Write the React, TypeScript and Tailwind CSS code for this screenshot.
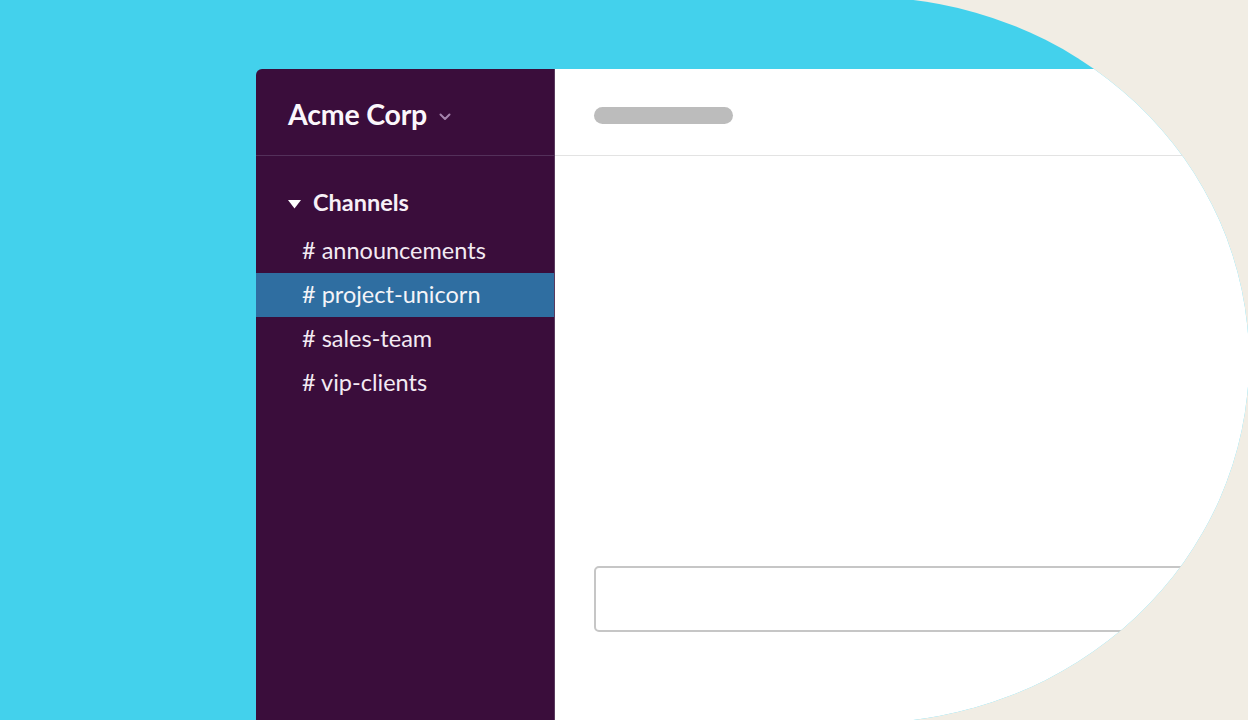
import React from 'react';

const channels = ['announcements', 'project-unicorn', 'sales-team', 'vip-clients'];

const Sidebar: React.FC = () => {
    return (
        <div className="w-[299px] shrink-0 bg-[#3a0d3b] border-r border-[#5a3a5e] text-white">
            <div className="h-[87px] border-b border-[#53305a] flex items-center pl-[32px] pt-[5px]">
                <span className="text-[28.5px] font-bold tracking-[-0.2px] text-[#fbf6fb]">Acme Corp</span>
                <svg className="ml-[12px] mt-[5px]" width="12" height="8" viewBox="0 0 12 8">
                    <polyline points="1.5,1.5 6,6 10.5,1.5" fill="none" stroke="#a584ad" strokeWidth="2" strokeLinecap="round" strokeLinejoin="round" />
                </svg>
            </div>

            <div className="pt-[25px]">
                <div className="h-[44px] mb-[4px] flex items-center pl-[32px]">
                    <svg width="13" height="9" viewBox="0 0 13 9" className="mt-[3px]">
                        <polygon points="0,0 13,0 6.5,8.5" fill="#ffffff" />
                    </svg>
                    <span className="ml-[12px] text-[23.5px] font-bold text-[#f7f0f7]">Channels</span>
                </div>
                {channels.map((c) => (
                    <div
                        key={c}
                        className={
                            c === 'project-unicorn'
                                ? 'h-[44px] flex items-center pl-[46px] bg-[#2f6ea1] text-[23.5px] text-[#f4f4f8]'
                                : 'h-[44px] flex items-center pl-[46px] text-[23.5px] text-[#f3eaf3]'
                        }
                    >
                        # {c}
                    </div>
                ))}
            </div>
        </div>
    );
};

const Content: React.FC = () => {
    return (
        <div className="flex-1 bg-white">
            <div className="h-[87px] border-b border-[#e3e3e3] pl-[39px] pt-[38px]">
                <div className="w-[139px] h-[17px] rounded-full bg-[#bcbcbc]" />
            </div>
            <div className="ml-[39px] mt-[410px] w-[700px] h-[66px] border-2 border-[#c6c6c6] rounded-[5px]" />
        </div>
    );
};

export default function App() {
    return (
        <div className="w-[1248px] h-[720px] overflow-hidden bg-[#f1ede4] font-['Lato',_'Noto_Sans',_sans-serif]">
            <div className="w-[1249px] h-[726px] -mt-[3px] bg-[#43d1ec] rounded-tr-[385px_363px] rounded-br-[385px_363px] overflow-hidden pt-[72px] pl-[256px]">
                <div className="flex w-[1000px] h-[660px] rounded-tl-[6px] overflow-hidden">
                    <Sidebar />
                    <Content />
                </div>
            </div>
        </div>
    );
}
